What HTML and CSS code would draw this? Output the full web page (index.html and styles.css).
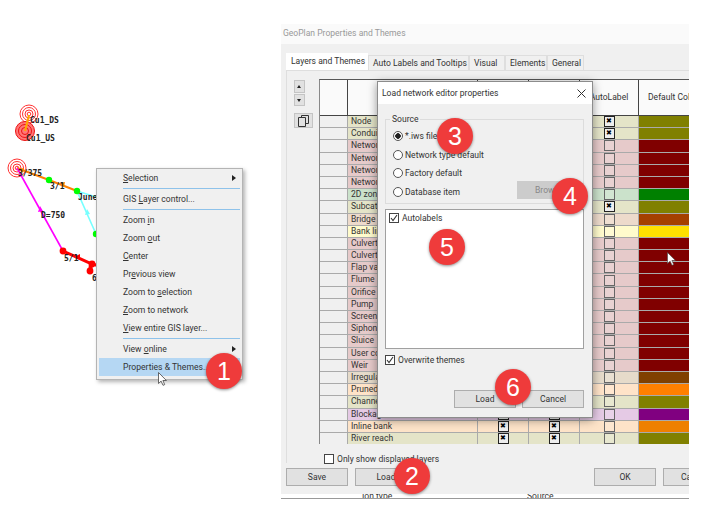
FILE: index.html
```html
<!DOCTYPE html>
<html lang="en">
<head>
    <meta charset="UTF-8">
    <meta name="viewport" content="width=device-width, initial-scale=1.0">
    <title>GeoPlan Properties and Themes</title>
    <link rel="stylesheet" href="styles.css">
</head>
<body>
    <div class="desk">
        <svg class="network" width="110" height="300" viewBox="0 0 110 300">
            <g fill="none" stroke="#f33" stroke-width="1">
                <circle cx="29" cy="114" r="9"/><circle cx="29" cy="114" r="6.5"/><circle cx="29" cy="114" r="4"/><circle cx="29" cy="114" r="1.8"/>
                <circle cx="17" cy="168" r="9"/><circle cx="17" cy="168" r="6.5"/><circle cx="17" cy="168" r="4"/><circle cx="17" cy="168" r="1.8"/>
            </g>
            <circle cx="25" cy="131" r="9.5" fill="#f77"/>
            <g fill="none" stroke="#e11" stroke-width="1">
                <circle cx="25" cy="131" r="9.5"/><circle cx="25" cy="131" r="6.5"/><circle cx="25" cy="131" r="3.5"/>
            </g>
            <line x1="29" y1="115" x2="25" y2="131" stroke="#fa0" stroke-width="2"/>
            <polyline points="17,168 49,180 77,191" fill="none" stroke="#ff8000" stroke-width="2"/>
            <polyline points="96,197 77,191 96,234" fill="none" stroke="#7ff" stroke-width="1.6"/>
            <line x1="17" y1="168" x2="63" y2="251" stroke="#f0f" stroke-width="1.6"/>
            <polyline points="63,251 92,264 100,266" fill="none" stroke="#f00" stroke-width="3"/>
            <line x1="91" y1="264" x2="90" y2="272" stroke="#f00" stroke-width="4"/>
            <path d="M19 169l5-1-1 5zM60 183l5-1-1 5z" fill="#ff8000"/>
            <path d="M87 209l-2 6 5-1z" fill="#7ff"/>
            <path d="M40 206l-2 6 5-1z" fill="#f0f"/>
            <path d="M74 257l6-3v6z" fill="#f00"/>
            <g fill="#0f0">
                <circle cx="49" cy="180" r="3.2"/><circle cx="77" cy="191" r="3.2"/><circle cx="96" cy="234" r="3.2"/>
            </g>
            <g fill="#f00">
                <circle cx="63" cy="251" r="3.4"/><circle cx="92" cy="264" r="3.4"/><circle cx="90" cy="271" r="3.4"/>
            </g>
            <g class="map-label">
                <text x="30" y="123">Cu1_DS</text>
                <text x="26" y="141">Cu1_US</text>
                <text x="18" y="176">3/375</text>
                <text x="50" y="189">3/1</text>
                <text x="78" y="200">June</text>
                <text x="41" y="218">D=750</text>
                <text x="64" y="261">5/1</text>
                <text x="92" y="281">6</text>
            </g>
        </svg>

        <div class="menu">
            <div class="item sub"><u>S</u>election</div>
            <div class="rule"></div>
            <div class="item">GIS <u>L</u>ayer control...</div>
            <div class="rule"></div>
            <div class="item">Zoom <u>i</u>n</div>
            <div class="item">Zoom <u>o</u>ut</div>
            <div class="item"><u>C</u>enter</div>
            <div class="item">Pr<u>e</u>vious view</div>
            <div class="item">Zoom to <u>s</u>election</div>
            <div class="item"><u>Z</u>oom to network</div>
            <div class="item"><u>V</u>iew entire GIS layer...</div>
            <div class="rule"></div>
            <div class="item sub">View <u>o</u>nline</div>
            <div class="item active">Properties &amp; Themes...</div>
        </div>

        <div class="window">
            <div class="win-title">GeoPlan Properties and Themes</div>
            <div class="tabs">
                <div class="tab current">Layers and Themes</div>
                <div class="tab w-auto">Auto Labels and Tooltips</div>
                <div class="tab w-visual">Visual</div>
                <div class="tab w-elements">Elements</div>
                <div class="tab w-general">General</div>
            </div>
            <div class="panel">
                <div class="panel-main">
                    <div class="side">
                        <div class="spin"><span class="up"></span><span class="down"></span></div>
                        <div class="copy">
                            <svg width="11" height="12" viewBox="0 0 11 12"><path d="M3.5 2.5v-2h7v8h-3M.5 2.500h7v9h-7z" fill="none" stroke="#333"/></svg>
                        </div>
                    </div>
                    <div class="grid">
                        <div class="row head">
                            <div class="rh"></div><div class="nm"></div><div class="c"></div><div class="c"></div><div class="c al">AutoLabel</div><div class="fill">Default Colour</div>
                        </div>
                        <div class="row t-olive"><div class="rh"></div><div class="nm">Node</div><div class="c on"></div><div class="c on"></div><div class="c al on"></div><div class="fill"></div></div>
                        <div class="row t-olive"><div class="rh"></div><div class="nm">Conduit</div><div class="c on"></div><div class="c on"></div><div class="c al on"></div><div class="fill"></div></div>
                        <div class="row t-maroon"><div class="rh"></div><div class="nm">Network</div><div class="c on"></div><div class="c on"></div><div class="c al"></div><div class="fill"></div></div>
                        <div class="row t-maroon"><div class="rh"></div><div class="nm">Network</div><div class="c on"></div><div class="c on"></div><div class="c al"></div><div class="fill"></div></div>
                        <div class="row t-maroon"><div class="rh"></div><div class="nm">Network</div><div class="c on"></div><div class="c on"></div><div class="c al"></div><div class="fill"></div></div>
                        <div class="row t-maroon"><div class="rh"></div><div class="nm">Network</div><div class="c on"></div><div class="c on"></div><div class="c al"></div><div class="fill"></div></div>
                        <div class="row t-green"><div class="rh"></div><div class="nm">2D zone</div><div class="c on"></div><div class="c on"></div><div class="c al"></div><div class="fill"></div></div>
                        <div class="row t-olive"><div class="rh"></div><div class="nm">Subcatchment</div><div class="c on"></div><div class="c on"></div><div class="c al on"></div><div class="fill"></div></div>
                        <div class="row t-rust"><div class="rh"></div><div class="nm">Bridge</div><div class="c on"></div><div class="c on"></div><div class="c al"></div><div class="fill"></div></div>
                        <div class="row t-yellow"><div class="rh"></div><div class="nm">Bank line</div><div class="c on"></div><div class="c on"></div><div class="c al"></div><div class="fill"></div></div>
                        <div class="row t-maroon"><div class="rh"></div><div class="nm">Culvert</div><div class="c on"></div><div class="c on"></div><div class="c al"></div><div class="fill"></div></div>
                        <div class="row t-maroon"><div class="rh"></div><div class="nm">Culvert</div><div class="c on"></div><div class="c on"></div><div class="c al"></div><div class="fill"></div></div>
                        <div class="row t-maroon"><div class="rh"></div><div class="nm">Flap valve</div><div class="c on"></div><div class="c on"></div><div class="c al"></div><div class="fill"></div></div>
                        <div class="row t-maroon"><div class="rh"></div><div class="nm">Flume</div><div class="c on"></div><div class="c on"></div><div class="c al"></div><div class="fill"></div></div>
                        <div class="row t-maroon"><div class="rh"></div><div class="nm">Orifice</div><div class="c on"></div><div class="c on"></div><div class="c al"></div><div class="fill"></div></div>
                        <div class="row t-maroon"><div class="rh"></div><div class="nm">Pump</div><div class="c on"></div><div class="c on"></div><div class="c al"></div><div class="fill"></div></div>
                        <div class="row t-maroon"><div class="rh"></div><div class="nm">Screen</div><div class="c on"></div><div class="c on"></div><div class="c al"></div><div class="fill"></div></div>
                        <div class="row t-maroon"><div class="rh"></div><div class="nm">Siphon</div><div class="c on"></div><div class="c on"></div><div class="c al"></div><div class="fill"></div></div>
                        <div class="row t-maroon"><div class="rh"></div><div class="nm">Sluice</div><div class="c on"></div><div class="c on"></div><div class="c al"></div><div class="fill"></div></div>
                        <div class="row t-maroon"><div class="rh"></div><div class="nm">User control</div><div class="c on"></div><div class="c on"></div><div class="c al"></div><div class="fill"></div></div>
                        <div class="row t-maroon"><div class="rh"></div><div class="nm">Weir</div><div class="c on"></div><div class="c on"></div><div class="c al"></div><div class="fill"></div></div>
                        <div class="row t-brown"><div class="rh"></div><div class="nm">Irregular weir</div><div class="c on"></div><div class="c on"></div><div class="c al"></div><div class="fill"></div></div>
                        <div class="row t-orange"><div class="rh"></div><div class="nm">Pruned</div><div class="c on"></div><div class="c on"></div><div class="c al"></div><div class="fill"></div></div>
                        <div class="row t-olive"><div class="rh"></div><div class="nm">Channel</div><div class="c on"></div><div class="c on"></div><div class="c al"></div><div class="fill"></div></div>
                        <div class="row t-purple"><div class="rh"></div><div class="nm">Blockage</div><div class="c on"></div><div class="c on"></div><div class="c al"></div><div class="fill"></div></div>
                        <div class="row t-amber"><div class="rh"></div><div class="nm">Inline bank</div><div class="c on"></div><div class="c on"></div><div class="c al"></div><div class="fill"></div></div>
                        <div class="row t-olive"><div class="rh"></div><div class="nm">River reach</div><div class="c on"></div><div class="c on"></div><div class="c al"></div><div class="fill"></div></div>
                    </div>
                </div>
                <label class="only-show"><span class="check"></span>Only show displayed layers</label>
            </div>
            <div class="win-foot">
                <div class="btn">Save</div>
                <div class="btn">Load</div>
                <div class="btn ok">OK</div>
                <div class="btn">Cancel</div>
            </div>
        </div>
        <div class="strip"><span class="s1">Ion type</span><span class="s2">Source</span></div>

        <div class="dialog">
            <div class="dlg-title">
                <span>Load network editor properties</span>
                <svg width="9" height="9" viewBox="0 0 9 9"><path d="M.5.5l8 8M8.500.5l-8 8" stroke="#333" fill="none"/></svg>
            </div>
            <div class="dlg-body">
                <fieldset class="source">
                    <legend>Source</legend>
                    <div class="opt"><span class="radio picked"></span>*.iws file</div>
                    <div class="opt"><span class="radio"></span>Network type default</div>
                    <div class="opt"><span class="radio"></span>Factory default</div>
                    <div class="opt last"><span class="radio"></span>Database item<div class="btn browse">Browse...</div></div>
                </fieldset>
                <div class="listbox">
                    <div class="opt"><span class="check ticked"><svg width="8" height="8" viewBox="0 0 8 8"><path d="M1 4l2 2.500L7 1" fill="none" stroke="#333" stroke-width="1.100"/></svg></span>Autolabels</div>
                </div>
                <div class="opt overwrite"><span class="check ticked"><svg width="8" height="8" viewBox="0 0 8 8"><path d="M1 4l2 2.500L7 1" fill="none" stroke="#333" stroke-width="1.100"/></svg></span>Overwrite themes</div>
                <div class="dlg-foot">
                    <div class="btn">Load</div>
                    <div class="btn">Cancel</div>
                </div>
            </div>
        </div>

        <svg class="cursor cur-menu" width="10" height="14" viewBox="0 0 10 14"><path d="M.5.500v11l2.600-2.400 1.900 4.200 1.700-.7-1.800-4.100h3.500z" fill="#fff" stroke="#444" stroke-width=".8"/></svg>
        <svg class="cursor cur-grid" width="10" height="14" viewBox="0 0 10 14"><path d="M.5.500v11l2.600-2.400 1.900 4.200 1.700-.7-1.800-4.100h3.500z" fill="#fff" stroke="#444" stroke-width=".6"/></svg>

        <div class="badge b1">1</div>
        <div class="badge b2">2</div>
        <div class="badge b3">3</div>
        <div class="badge b4">4</div>
        <div class="badge b5">5</div>
        <div class="badge b6">6</div>
    </div>
</body>
</html>
```

FILE: styles.css
```css
* {
    box-sizing: border-box;
}
body {
    margin: 0;
    background-color: #fff;
    font-family: Roboto, "Noto Sans", sans-serif;
    font-size: 8.550px;
    color: #333;
}
.desk {
    position: relative;
    width: 715px;
    height: 516px;
    overflow: hidden;
}

/* network on the map */
.network {
    position: absolute;
    left: 0;
    top: 0;
}
.map-label text {
    font-family: "DejaVu Sans Mono", monospace;
    font-size: 8px;
    font-weight: bold;
    fill: #222;
}

/* context menu */
.menu {
    position: absolute;
    left: 96px;
    top: 168px;
    width: 147px;
    height: 212px;
    padding: 0 2px;
    background: #f0f0f0;
    border: 1px solid #b4b4b4;
    box-shadow: 2px 2px 4px rgba(0, 0, 0, 0.3);
    font-size: 8.600px;
}
.menu .item {
    position: relative;
    height: 18px;
    line-height: 19px;
    padding-left: 24px;
}
.menu .item.sub::after {
    content: "";
    position: absolute;
    right: 4px;
    top: 6px;
    border-left: 4px solid #222;
    border-top: 3px solid transparent;
    border-bottom: 3px solid transparent;
}
.menu .item.active {
    background: #b5d7f3;
}
.menu .rule {
    height: 1px;
    margin: 1px 0 1px 24px;
    background: #8ec2ea;
}

/* main window */
.window {
    position: absolute;
    left: 281px;
    top: 24px;
    width: 408px;
    height: 470px;
    background: #f0f0f0;
    overflow: hidden;
}
.win-title {
    height: 20px;
    line-height: 18px;
    padding-left: 2px;
    background: #fafafa;
    color: #999;
}
.tabs {
    display: flex;
    align-items: flex-end;
    height: 26px;
    padding-left: 5px;
}
.tab {
    height: 15px;
    line-height: 14px;
    padding-left: 4px;
    border: 1px solid #dedede;
    border-bottom: 0;
    background: #f0f0f0;
    white-space: nowrap;
}
.tab.current {
    width: 82px;
    height: 17px;
    background: #fff;
    border-color: #fff;
}
.w-auto { width: 101px; }
.w-visual { width: 36px; }
.w-elements { width: 42px; }
.w-general { width: 37px; }
.panel {
    height: 393px;
    margin-left: 5px;
    padding: 8px 0 0 7px;
    border-left: 1px solid #dedede;
    border-top: 1px solid #dedede;
}
.panel-main {
    display: flex;
}
.side {
    width: 25px;
    flex: none;
}
.spin {
    width: 11px;
    height: 26px;
    margin-top: 1px;
    display: flex;
    flex-direction: column;
    gap: 1px;
}
.spin span {
    position: relative;
    flex: 1;
    background: #e1e1e1;
    border: 1px solid #c4c4c4;
}
.spin span::after {
    content: "";
    position: absolute;
    left: 2px;
    top: 4px;
    border-left: 2.500px solid transparent;
    border-right: 2.500px solid transparent;
}
.spin .up::after {
    border-bottom: 3px solid #222;
}
.spin .down::after {
    border-top: 3px solid #222;
}
.copy {
    width: 19px;
    height: 15px;
    margin-top: 7px;
    display: flex;
    align-items: center;
    justify-content: center;
    background: #e1e1e1;
    border: 1px solid #c4c4c4;
}
.grid {
    flex: 1;
    height: 365px;
    border-left: 1px solid #888;
    border-top: 1px solid #555;
    overflow: hidden;
}

/* table rows */
.row {
    display: flex;
    height: 12.200px;
    line-height: 11px;
}
.row > div {
    flex: none;
    border-bottom: 1px solid #aaa;
    border-right: 1px solid #aaa;
}
.row .rh { width: 28px; background: #f0f0f0; }
.row .nm {
    width: 130px;
    padding-left: 3px;
    background: var(--tint);
    white-space: nowrap;
}
.row .c {
    width: 51px;
    display: flex;
    align-items: center;
    justify-content: center;
    background: var(--tint);
}
.row .c.al { width: 59px; }
.row .c::before {
    content: "";
    display: flex;
    align-items: center;
    justify-content: center;
    width: 9px;
    height: 9px;
    border: 1px solid #666;
    background: rgba(255, 255, 255, 0.15);
    color: #000;
    font-family: "DejaVu Sans", sans-serif;
    font-size: 7px;
    font-weight: bold;
    line-height: 7px;
}
.row .c.on::before {
    content: "\2716";
    border-color: #222;
    background: #eee;
}
.row .fill {
    width: 60px;
    background: var(--fill);
}
.row.head {
    height: 36px;
    line-height: 35px;
}
.row.head > div {
    background: #fafafa;
    border-bottom: 1px solid #444;
    border-right: 1px solid #444;
    white-space: nowrap;
}
.row.head .c::before {
    display: none;
}
.row.head .fill {
    padding-left: 9px;
    overflow: hidden;
}
.t-olive { --tint: #e4e4c8; --fill: #808000; }
.t-maroon { --tint: #e6caca; --fill: #800000; }
.t-green { --tint: #cbe2cb; --fill: #008000; }
.t-rust { --tint: #eddacb; --fill: #a54000; }
.t-yellow { --tint: #fffbcc; --fill: #ffe000; }
.t-brown { --tint: #e6dbca; --fill: #804000; }
.t-orange { --tint: #ffe3c8; --fill: #ff8000; }
.t-purple { --tint: #e5cae5; --fill: #800080; }
.t-amber { --tint: #fde3c8; --fill: #ee8000; }

.only-show {
    display: flex;
    align-items: center;
    height: 10px;
    margin: 10px 0 0 30px;
}
.check {
    flex: none;
    display: flex;
    align-items: center;
    justify-content: center;
    width: 10px;
    height: 10px;
    margin-right: 3px;
    background: #fff;
    border: 1px solid #444;
}
.win-foot {
    display: flex;
    gap: 7px;
    padding: 5px 0 0 5px;
}
.btn {
    flex: none;
    width: 62px;
    height: 18px;
    line-height: 16px;
    text-align: center;
    background: #e1e1e1;
    border: 1px solid #adadad;
}
.btn.ok {
    margin-left: 170px;
}

/* clipped bit of the table behind the window */
.strip {
    position: absolute;
    left: 281px;
    top: 494px;
    width: 408px;
    height: 5px;
    border-bottom: 1px solid #999;
    overflow: hidden;
    line-height: 4px;
}
.strip .s1 { position: absolute; left: 81px; }
.strip .s2 { position: absolute; left: 246px; }

/* load dialog */
.dialog {
    position: absolute;
    left: 377px;
    top: 81px;
    width: 216px;
    height: 337px;
    background: #f0f0f0;
    border: 1px solid #8c8c8c;
    box-shadow: 0 2px 9px rgba(0, 0, 0, 0.4);
}
.dlg-title {
    display: flex;
    align-items: center;
    justify-content: space-between;
    height: 22px;
    padding: 0 6px 0 4px;
    background: #fff;
}
.dlg-body {
    padding: 10px 8px 0 7px;
}
.source {
    height: 90px;
    margin: 0;
    padding: 3px 0 0 7px;
    border: 1px solid #dcdcdc;
}
.source legend {
    padding: 0 2px;
    margin-left: -3px;
    line-height: 10px;
}
.opt {
    display: flex;
    align-items: center;
    height: 18.600px;
}
.radio {
    flex: none;
    width: 10px;
    height: 10px;
    margin-right: 2px;
    background: #fff;
    border: 1px solid #555;
    border-radius: 50%;
}
.radio.picked {
    background: radial-gradient(circle, #222 0 2.500px, #fff 3px);
}
.browse {
    width: 53px;
    height: 18px;
    margin: -4px 13px 0 auto;
    background: #ccc;
    border-color: #ccc;
    color: #888;
    text-align: left;
    padding-left: 17px;
}
.listbox {
    height: 140px;
    margin-top: 5px;
    padding: 0 3px;
    background: #fff;
    border: 1px solid #a0a0a0;
}
.listbox .opt {
    height: 16px;
}
.overwrite {
    height: 14px;
    margin-top: 4px;
}
.dlg-foot {
    display: flex;
    justify-content: flex-end;
    gap: 6px;
    margin-top: 23px;
}

.cursor {
    position: absolute;
}
.cur-menu { left: 158px; top: 372px; }
.cur-grid { left: 667px; top: 252px; }

/* numbered callouts */
.badge {
    position: absolute;
    width: 36px;
    height: 36px;
    line-height: 36px;
    text-align: center;
    border-radius: 50%;
    background: #ef3b3b;
    color: #fff;
    font-family: "Liberation Sans", Arial, sans-serif;
    font-size: 25px;
    box-shadow: 0 1px 3px rgba(0, 0, 0, 0.45);
}
.b1 { left: 206px; top: 353px; }
.b2 { left: 394px; top: 458px; }
.b3 { left: 437px; top: 118px; }
.b4 { left: 552px; top: 178px; }
.b5 { left: 429px; top: 229px; }
.b6 { left: 495px; top: 369px; }
```
